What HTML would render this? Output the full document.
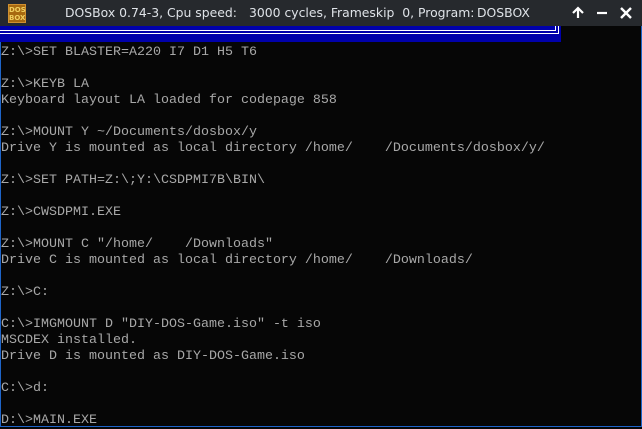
<!DOCTYPE html>
<html><head><meta charset="utf-8"><style>
*{margin:0;padding:0;box-sizing:border-box}
html,body{width:642px;height:427px;overflow:hidden;background:#060606}
#win{position:absolute;left:0;top:0;width:642px;height:427px;border:1px solid #1e64c8;background:#060606}
#tb{position:absolute;left:0;top:0;width:642px;height:26px;background:#26292d}
.t{position:absolute;top:5px;font:12.4px "DejaVu Sans",sans-serif;color:#dfe3e8;white-space:pre}
#ico{position:absolute;left:8px;top:4px;width:18px;height:19px;background:#a86a10;border:1px solid #d09030;font:bold 7px "DejaVu Sans",sans-serif;color:#f0d060;text-align:center;line-height:8px;padding-top:1px}
#blue{position:absolute;left:0;top:26px;width:561px;height:16px;background:#0000aa}
.w{position:absolute;background:#fff}
#txt{position:absolute;left:1px;top:45px;font:13.333px/16px "Liberation Mono",monospace;color:#a8a8a8;white-space:pre}
</style></head><body>
<div id="win"></div>
<div id="tb"><div id="ico">DOS<br>BOX</div>
<div class="t" style="left:65px">DOSBox 0.74-3, Cpu speed:</div>
<div class="t" style="left:249px">3000 cycles, Frameskip  0, Program:</div>
<div class="t" style="left:477px">DOSBOX</div>
<svg style="position:absolute;left:571px;top:6px" width="14" height="14"><path d="M7 12V2M2 7L7 2L12 7" stroke="#fff" stroke-width="2.2" fill="none"/></svg>
<svg style="position:absolute;left:595px;top:6px" width="14" height="14"><path d="M2 7H12" stroke="#fff" stroke-width="2.2"/></svg>
<svg style="position:absolute;left:619px;top:6px" width="14" height="14"><path d="M2 2L12 12M12 2L2 12" stroke="#fff" stroke-width="2.4"/></svg>
</div>
<div id="blue">
<div class="w" style="left:0;top:4px;width:556px;height:1px"></div>
<div class="w" style="left:0;top:7px;width:559px;height:1px"></div>
<div class="w" style="left:555px;top:0;width:1px;height:5px"></div>
<div class="w" style="left:558px;top:0;width:1px;height:8px"></div>
</div>
<div id="txt">Z:\>SET BLASTER=A220 I7 D1 H5 T6

Z:\>KEYB LA
Keyboard layout LA loaded for codepage 858

Z:\>MOUNT Y ~/Documents/dosbox/y
Drive Y is mounted as local directory /home/    /Documents/dosbox/y/

Z:\>SET PATH=Z:\;Y:\CSDPMI7B\BIN\

Z:\>CWSDPMI.EXE

Z:\>MOUNT C "/home/    /Downloads"
Drive C is mounted as local directory /home/    /Downloads/

Z:\>C:

C:\>IMGMOUNT D "DIY-DOS-Game.iso" -t iso
MSCDEX installed.
Drive D is mounted as DIY-DOS-Game.iso

C:\>d:

D:\>MAIN.EXE</div>
</body></html>
